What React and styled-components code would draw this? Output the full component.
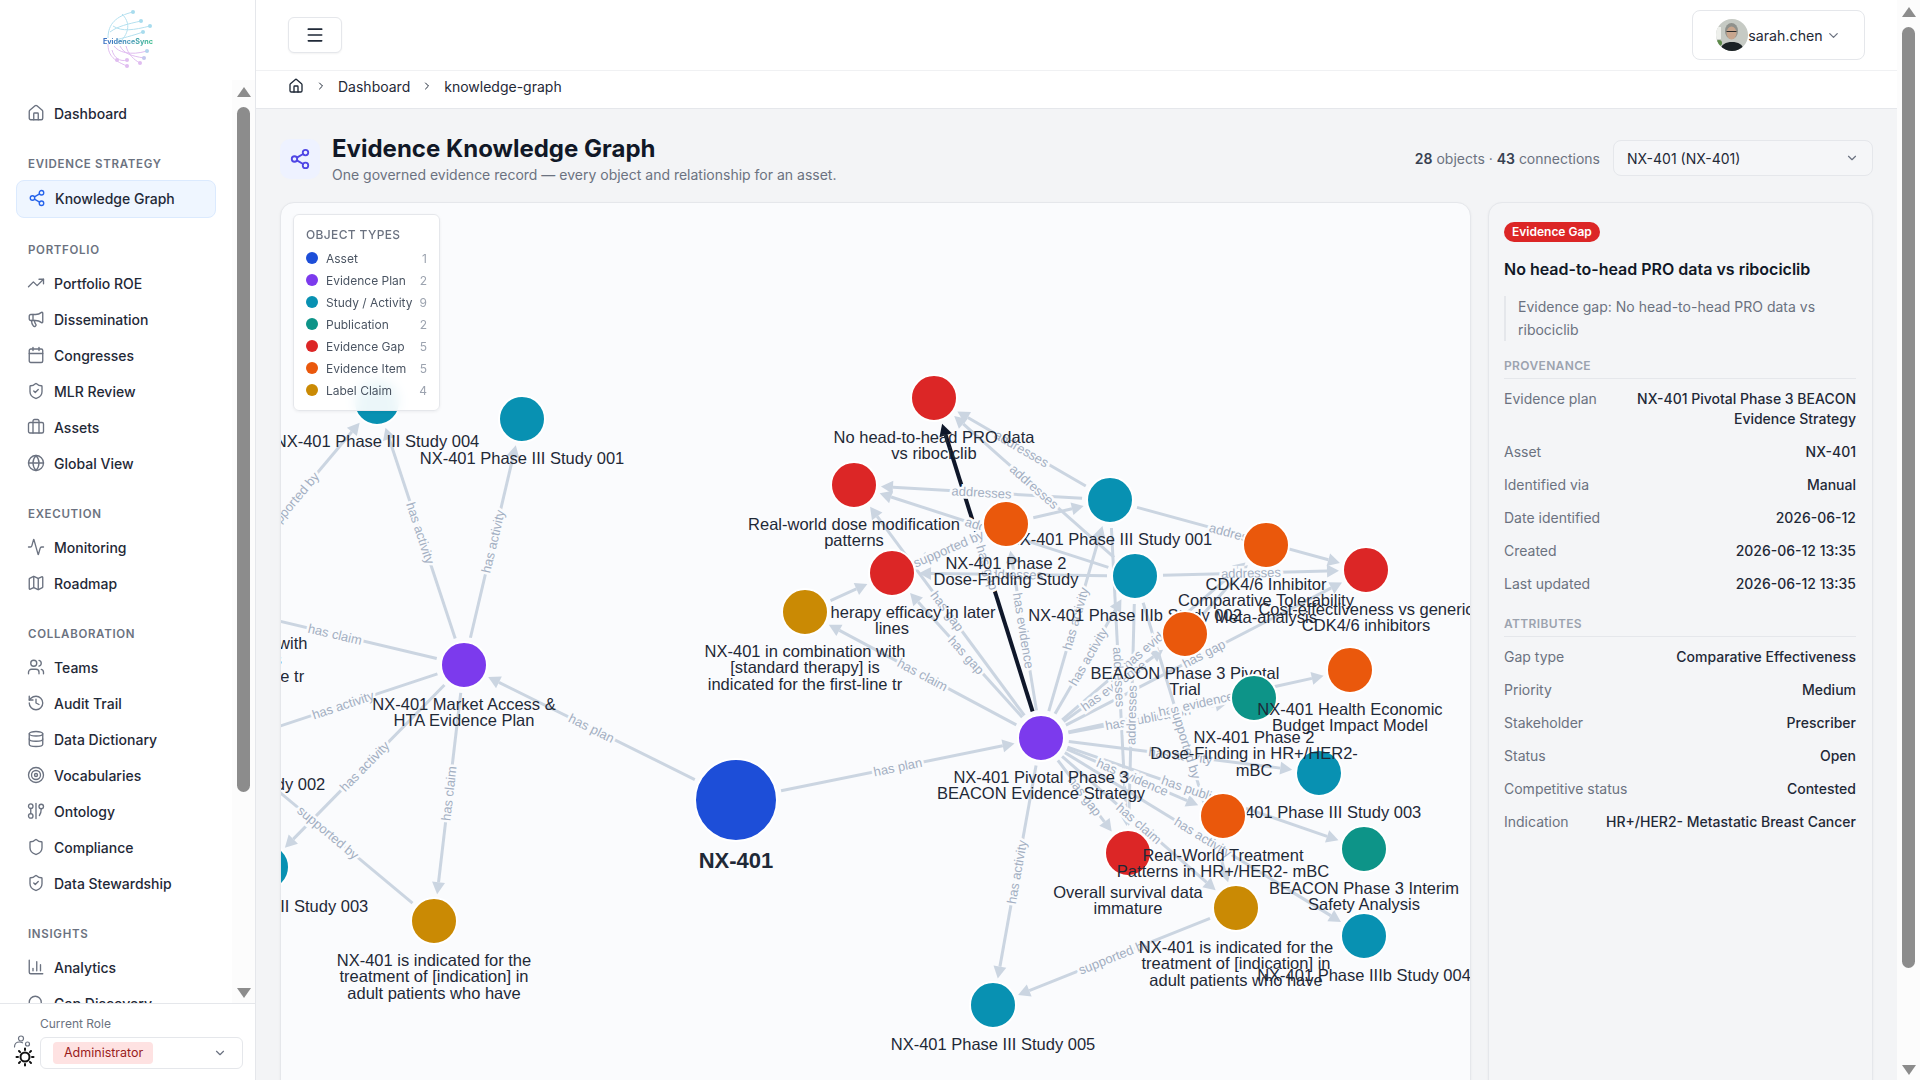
import React from 'react';
import styled, { createGlobalStyle } from 'styled-components';
import {
  House, Share2, TrendingUp, Megaphone, Calendar, ShieldCheck, Briefcase, Globe, Activity,
  Map as MapIcon, Users, History, Database, Target, Shield, ChartColumn, Search, Menu,
  ChevronRight, ChevronDown,
} from 'lucide-react';

const GlobalStyle = createGlobalStyle`
  * { box-sizing: border-box; }
  html, body { margin: 0; height: 100%; overflow: hidden; }
  body { font-family: Inter, "Liberation Sans", sans-serif; color: #1f2937; background: #f3f4f6; }
  #root { height: 100%; }
`;

const Page = styled.div`
  display: flex;
  height: 1080px;
  overflow: hidden;
`;

const Sidebar = styled.aside`
  display: flex;
  flex-direction: column;
  width: 256px;
  flex-shrink: 0;
  background: #fff;
  border-right: 1px solid #e5e7eb;
`;

const LogoBox = styled.div`
  display: flex;
  justify-content: center;
  height: 80px;
  padding-top: 8px;
  svg { filter: blur(0.35px); }
`;

const NavArea = styled.div`
  display: flex;
  flex: 1;
  min-height: 0;
`;

const NavList = styled.nav`
  flex: 1;
  min-width: 0;
  padding: 16px 16px 0;
  overflow: hidden;
`;

const Heading = styled.div`
  margin: 24px 0 8px;
  padding-left: 12px;
  font-size: 11.5px;
  line-height: 16px;
  font-weight: 600;
  letter-spacing: 0.06em;
  text-transform: uppercase;
  color: #6b7280;
`;

const NavItem = styled.a`
  display: flex;
  align-items: center;
  gap: 9px;
  height: ${p => (p.$active ? '38px' : '36px')};
  padding: 0 0 2px 11px;
  font-size: 14px;
  font-weight: 500;
  color: #1f2937;
  white-space: nowrap;
  border-radius: 8px;
  border: ${p => (p.$active ? '1px solid #dbeafe' : 'none')};
  background: ${p => (p.$active ? '#eff6ff' : 'transparent')};
  svg { flex-shrink: 0; color: ${p => (p.$active ? '#2563eb' : '#6b7280')}; }
`;

const ScrollBar = styled.div`
  display: flex;
  flex-direction: column;
  align-items: center;
  width: 23px;
  flex-shrink: 0;
  background: #fcfcfc;
  padding: ${p => p.$pad}px 0 ${p => p.$pad - 2}px;
`;

const ScrollThumb = styled.div`
  width: 13px;
  height: ${p => p.$height}px;
  margin-top: 10px;
  border-radius: 7px;
  background: #8c8c8c;
`;

const ScrollUp = styled.div`
  width: 0;
  height: 0;
  border-left: 7px solid transparent;
  border-right: 7px solid transparent;
  border-bottom: 10px solid #8c8c8c;
`;

const ScrollDown = styled(ScrollUp)`
  margin-top: auto;
  border-bottom: none;
  border-top: 10px solid #8c8c8c;
`;

const SideFooter = styled.div`
  display: flex;
  gap: 5px;
  height: 77px;
  flex-shrink: 0;
  padding: 12px 12px 0 13px;
  border-top: 1px solid #e5e7eb;
  background: #fff;
`;

const ThemeIcon = styled.svg`
  width: 22px;
  height: 34px;
  margin-top: 19px;
  flex-shrink: 0;
`;

const RoleCol = styled.div`
  flex: 1;
`;

const RoleLabel = styled.div`
  font-size: 12px;
  line-height: 16px;
  color: #6b7280;
  margin-bottom: 5px;
`;

const RoleSelect = styled.div`
  display: flex;
  align-items: center;
  justify-content: space-between;
  height: 32px;
  padding: 0 15px 0 12px;
  background: #fff;
  border: 1px solid #e5e7eb;
  border-radius: 6px;
  svg { color: #6b7280; }
`;

const RoleTag = styled.span`
  width: 100px;
  height: 22px;
  padding-left: 11px;
  font-size: 12.5px;
  line-height: 22px;
  color: #991b1b;
  background: #fee2e2;
  border-radius: 4px;
`;

const Main = styled.main`
  display: flex;
  flex-direction: column;
  flex: 1;
  min-width: 0;
`;

const TopBar = styled.header`
  display: flex;
  align-items: center;
  justify-content: space-between;
  height: 71px;
  flex-shrink: 0;
  padding: 0 32px;
  background: #fff;
  border-bottom: 1px solid #f0f1f3;
`;

const MenuButton = styled.button`
  display: flex;
  align-items: center;
  justify-content: center;
  width: 54px;
  height: 36px;
  padding: 0;
  background: #fff;
  color: #1f2937;
  border: 1px solid #e5e7eb;
  border-radius: 6px;
  box-shadow: 0 1px 2px rgba(0, 0, 0, 0.05);
`;

const UserButton = styled.div`
  display: flex;
  align-items: center;
  justify-content: center;
  width: 173px;
  height: 50px;
  font-size: 14.2px;
  color: #1f2937;
  background: #fff;
  border: 1px solid #e5e7eb;
  border-radius: 8px;
  svg.chev { margin-left: 3px; color: #6b7280; }
`;

const Avatar = styled.svg`
  width: 32px;
  height: 32px;
  border-radius: 50%;
  flex-shrink: 0;
`;

const Crumbs = styled.div`
  display: flex;
  align-items: center;
  gap: 11px;
  height: 38px;
  flex-shrink: 0;
  padding: 0 0 7px 32px;
  font-size: 14px;
  color: #1f2937;
  background: #fff;
  border-bottom: 1px solid #e5e7eb;
  svg { color: #1f2937; }
`;

const Content = styled.div`
  flex: 1;
  min-height: 0;
  display: flex;
  flex-direction: column;
  padding: 24px 24px 0;
  background: #f3f4f6;
`;

const TitleRow = styled.div`
  display: flex;
  align-items: center;
  flex-shrink: 0;
`;

const TitleIcon = styled.div`
  display: flex;
  align-items: center;
  justify-content: center;
  width: 40px;
  height: 40px;
  margin-right: 12px;
  border-radius: 10px;
  background: #eef2ff;
  color: #4f46e5;
`;

const TitleText = styled.div`
  flex: 1;
`;

const Title = styled.h1`
  margin: 1px 0;
  font-size: 24px;
  line-height: 30px;
  font-weight: 700;
  color: #111827;
`;

const Subtitle = styled.p`
  margin: 0;
  font-size: 14px;
  line-height: 20px;
  color: #6b7280;
`;

const Stats = styled.div`
  margin: 0 13px 2px 0;
  font-size: 14px;
  color: #6b7280;
  b { font-weight: 600; color: #374151; }
`;

const AssetSelect = styled.div`
  display: flex;
  align-items: center;
  justify-content: space-between;
  width: 260px;
  height: 36px;
  margin-bottom: 2px;
  padding: 0 13px;
  font-size: 14px;
  color: #1f2937;
  border: 1px solid #e5e7eb;
  border-radius: 8px;
  background: #f5f6f8;
  svg { color: #6b7280; }
`;

const Columns = styled.div`
  flex: 1;
  min-height: 0;
  display: grid;
  grid-template-columns: 1191px 385px;
  gap: 17px;
  margin-top: 17px;
  margin-bottom: -20px;
`;

const GraphCard = styled.section`
  position: relative;
  overflow: hidden;
  background: #fafbfd;
  border: 1px solid #e5e7eb;
  border-radius: 14px;
  box-shadow: 0 1px 3px rgba(15, 23, 42, 0.05);
`;

const GraphSvg = styled.svg`
  display: block;
  font-family: "Liberation Sans", Arial, sans-serif;
`;

const EdgeLine = styled.line`
  stroke: ${p => (p.$selected ? '#0f172a' : '#cbd5e1')};
  stroke-width: ${p => (p.$selected ? 4 : 3)};
`;

const EdgeHead = styled.polygon`
  fill: ${p => (p.$selected ? '#0f172a' : '#cbd5e1')};
`;

const EdgeLabel = styled.text`
  font-size: 13px;
  fill: #a3afc2;
  stroke: #fafbfd;
  stroke-width: 5px;
  paint-order: stroke;
  text-anchor: middle;
  dominant-baseline: central;
`;

const NodeCircle = styled.circle`
  fill: ${p => p.$color};
  stroke: #fff;
  stroke-width: 2;
`;

const NodeLabel = styled.text`
  font-size: ${p => (p.$big ? '22px' : '16.5px')};
  font-weight: ${p => (p.$big ? 700 : 400)};
  fill: #1f2937;
  text-anchor: middle;
  dominant-baseline: central;
`;

const Legend = styled.div`
  position: absolute;
  left: 12px;
  top: 11px;
  width: 147px;
  height: 197px;
  padding: 12px;
  background: rgba(255, 255, 255, 0.92);
  backdrop-filter: blur(6px);
  border: 1px solid #e5e7eb;
  border-radius: 6px;
  box-shadow: 0 1px 3px rgba(15, 23, 42, 0.06);
`;

const LegendTitle = styled.div`
  margin-bottom: 4px;
  font-size: 12px;
  line-height: 16px;
  font-weight: 500;
  letter-spacing: 0.03em;
  color: #6b7280;
`;

const LegendRow = styled.div`
  display: flex;
  align-items: center;
  height: 22px;
  font-size: 12px;
  color: #4b5563;
`;

const LegendDot = styled.span`
  width: 12px;
  height: 12px;
  margin-right: 8px;
  border-radius: 50%;
  background: ${p => p.$color};
`;

const LegendCount = styled.span`
  margin-left: auto;
  color: #9ca3af;
`;

const Panel = styled.aside`
  padding: 19px 16px 0 15px;
  background: #f4f5f7;
  border: 1px solid #e5e7eb;
  border-radius: 14px;
  box-shadow: 0 1px 3px rgba(15, 23, 42, 0.05);
`;

const GapBadge = styled.span`
  display: inline-block;
  height: 20px;
  padding: 0 8px;
  font-size: 12px;
  line-height: 20px;
  font-weight: 600;
  color: #fff;
  background: #dc2626;
  border-radius: 999px;
  vertical-align: top;
`;

const PanelTitle = styled.h2`
  margin: 15px 0;
  font-size: 16px;
  line-height: 24px;
  font-weight: 600;
  color: #111827;
`;

const PanelDesc = styled.p`
  margin: 0 0 17px;
  padding-left: 12px;
  font-size: 14px;
  line-height: 22.5px;
  color: #6b7280;
  border-left: 2px solid #e5e7eb;
`;

const SectionHead = styled.div`
  padding-bottom: 4px;
  font-size: 12px;
  line-height: 16px;
  font-weight: 600;
  letter-spacing: 0.03em;
  color: #9ca3af;
  border-bottom: 1px solid #e5e7eb;
`;

const Rows = styled.div`
  display: flex;
  flex-direction: column;
  gap: 13px;
  margin: 10px 0 22px;
`;

const Row = styled.div`
  display: flex;
  justify-content: space-between;
  gap: 24px;
  font-size: 14px;
  line-height: 20px;
`;

const RowLabel = styled.span`
  flex-shrink: 0;
  color: #6b7280;
`;

const RowValue = styled.span`
  text-align: right;
  font-weight: 500;
  color: #1f2937;
`;

const COLORS = {
  asset: '#1d4ed8',
  plan: '#7c3aed',
  study: '#0891b2',
  pub: '#0d9488',
  gap: '#dc2626',
  item: '#ea580c',
  claim: '#ca8a04',
};

const LEGEND = [
  ['Asset', COLORS.asset, 1],
  ['Evidence Plan', COLORS.plan, 2],
  ['Study / Activity', COLORS.study, 9],
  ['Publication', COLORS.pub, 2],
  ['Evidence Gap', COLORS.gap, 5],
  ['Evidence Item', COLORS.item, 5],
  ['Label Claim', COLORS.claim, 4],
];

// drawn in this order, later nodes cover earlier labels
const NODES = [
  { id: 'comboL', t: 'claim', x: 207, y: 604, lines: ['NX-401 in combination with', '[standard therapy] is', 'indicated for the first-line tr'] },
  { id: 's004', t: 'study', x: 377, y: 402, lines: ['NX-401 Phase III Study 004'] },
  { id: 's001a', t: 'study', x: 522, y: 419, lines: ['NX-401 Phase III Study 001'] },
  { id: 's003a', t: 'study', x: 266, y: 867, lines: ['NX-401 Phase III Study 003'] },
  { id: 's002', t: 'study', x: 223, y: 745, lines: ['NX-401 Phase III Study 002'] },
  { id: 'market', t: 'plan', x: 464, y: 665, lines: ['NX-401 Market Access &', 'HTA Evidence Plan'] },
  { id: 'claimB', t: 'claim', x: 434, y: 921, lines: ['NX-401 is indicated for the', 'treatment of [indication] in', 'adult patients who have'] },
  { id: 'asset', t: 'asset', x: 736, y: 800, r: 40, big: true, lines: ['NX-401'] },
  { id: 'gapNo', t: 'gap', x: 934, y: 398, lines: ['No head-to-head PRO data', 'vs ribociclib'] },
  { id: 'gapRW', t: 'gap', x: 854, y: 485, lines: ['Real-world dose modification', 'patterns'] },
  { id: 'gapTher', t: 'gap', x: 892, y: 573, lines: ['herapy efficacy in later', 'lines'], lineX: [913, 892] },
  { id: 's001b', t: 'study', x: 1110, y: 500, lines: ['NX-401 Phase III Study 001'] },
  { id: 'pivot', t: 'plan', x: 1041, y: 738, lines: ['NX-401 Pivotal Phase 3', 'BEACON Evidence Strategy'] },
  { id: 's002b', t: 'study', x: 1135, y: 576, lines: ['NX-401 Phase IIIb Study 002'] },
  { id: 'claimC', t: 'claim', x: 805, y: 612, lines: ['NX-401 in combination with', '[standard therapy] is', 'indicated for the first-line tr'] },
  { id: 'itemP2', t: 'item', x: 1006, y: 524, lines: ['NX-401 Phase 2', 'Dose-Finding Study'] },
  { id: 'cdk', t: 'item', x: 1266, y: 545, lines: ['CDK4/6 Inhibitor', 'Comparative Tolerability', 'Meta-analysis'] },
  { id: 'gapCost', t: 'gap', x: 1366, y: 570, lines: ['Cost-effectiveness vs generic', 'CDK4/6 inhibitors'] },
  { id: 'beacon', t: 'item', x: 1185, y: 634, lines: ['BEACON Phase 3 Pivotal', 'Trial'] },
  { id: 's003b', t: 'study', x: 1319, y: 773, lines: ['NX-401 Phase III Study 003'] },
  { id: 'pubP2', t: 'pub', x: 1254, y: 698, lines: ['NX-401 Phase 2', 'Dose-Finding in HR+/HER2-', 'mBC'] },
  { id: 'he', t: 'item', x: 1350, y: 670, lines: ['NX-401 Health Economic', 'Budget Impact Model'] },
  { id: 'gapOS', t: 'gap', x: 1128, y: 853, lines: ['Overall survival data', 'immature'] },
  { id: 'itemRW', t: 'item', x: 1223, y: 816, lines: ['Real-World Treatment', 'Patterns in HR+/HER2- mBC'] },
  { id: 'pubInt', t: 'pub', x: 1364, y: 849, lines: ['BEACON Phase 3 Interim', 'Safety Analysis'] },
  { id: 'claimR', t: 'claim', x: 1236, y: 908, lines: ['NX-401 is indicated for the', 'treatment of [indication] in', 'adult patients who have'] },
  { id: 's004b', t: 'study', x: 1364, y: 936, lines: ['NX-401 Phase IIIb Study 004'] },
  { id: 's005', t: 'study', x: 993, y: 1005, lines: ['NX-401 Phase III Study 005'] },
];

const EDGES = [
  ['asset', 'market', 'has plan'],
  ['asset', 'pivot', 'has plan'],
  ['market', 's004', 'has activity'],
  ['market', 's001a', 'has activity'],
  ['market', 'comboL', 'has claim'],
  ['market', 's002', 'has activity'],
  ['market', 's003a', 'has activity'],
  ['market', 'claimB', 'has claim'],
  ['claimB', 's002', 'supported by'],
  ['comboL', 's004', 'supported by'],
  ['pivot', 'gapRW', 'has gap'],
  ['pivot', 'gapTher', 'has gap'],
  ['pivot', 'claimC', 'has claim'],
  ['pivot', 'itemP2', 'has evidence'],
  ['pivot', 's001b', 'has activity'],
  ['pivot', 's002b', 'has activity'],
  ['pivot', 'beacon', 'has evidence'],
  ['pivot', 'cdk', 'has evidence'],
  ['pivot', 'pubP2', 'has publication'],
  ['pivot', 'he', 'has evidence'],
  ['pivot', 'gapCost', 'has gap'],
  ['pivot', 's003b', 'has activity'],
  ['pivot', 'itemRW', 'has evidence'],
  ['pivot', 'pubInt', 'has publication'],
  ['pivot', 's004b', 'has activity'],
  ['pivot', 'gapOS', 'has gap'],
  ['pivot', 'claimR', 'has claim'],
  ['pivot', 's005', 'has activity'],
  ['claimR', 's005', 'supported by'],
  ['s001b', 'gapNo', 'addresses'],
  ['s001b', 'gapRW', 'addresses'],
  ['s001b', 'gapCost', 'addresses'],
  ['s001b', 'gapOS', 'addresses'],
  ['s002b', 'gapNo', 'addresses'],
  ['s002b', 'gapRW', 'addresses'],
  ['s002b', 'gapTher', 'addresses'],
  ['s002b', 'gapCost', 'addresses'],
  ['s002b', 'gapOS', 'addresses'],
  ['s002b', 'claimR', 'supported by'],
  ['itemP2', 'gapTher', 'supported by'],
  ['itemP2', 's001b', ''],
  ['claimC', 'gapTher', ''],
  ['beacon', 'cdk', ''],
  ['pivot', 'gapNo', 'has gap', true],
];

const byId = Object.fromEntries(NODES.map(n => [n.id, n]));

function edgeGeom(from, to) {
  const a = byId[from];
  const b = byId[to];
  const dx = b.x - a.x;
  const dy = b.y - a.y;
  const len = Math.hypot(dx, dy);
  const ux = dx / len;
  const uy = dy / len;
  const ra = (a.r || 22) + 6;
  const rb = (b.r || 22) + 5;
  const start = { x: a.x + ux * ra, y: a.y + uy * ra };
  const tip = { x: b.x - ux * rb, y: b.y - uy * rb };
  const base = { x: tip.x - ux * 12, y: tip.y - uy * 12 };
  const head = [
    [tip.x, tip.y],
    [base.x - uy * 6.5, base.y + ux * 6.5],
    [base.x + uy * 6.5, base.y - ux * 6.5],
  ].map(p => p.join(',')).join(' ');
  let angle = (Math.atan2(dy, dx) * 180) / Math.PI;
  if (angle > 90) angle -= 180;
  if (angle < -90) angle += 180;
  return {
    x1: start.x, y1: start.y, x2: base.x, y2: base.y,
    head, mx: (start.x + tip.x) / 2, my: (start.y + tip.y) / 2, angle,
  };
}

function Graph() {
  const edges = EDGES.map(([from, to, label, selected]) => ({ ...edgeGeom(from, to), label, selected, key: from + to }));
  return (
    <GraphSvg width="1189" height="877" viewBox="281 203 1189 877">
      {edges.map(e => (
        <g key={e.key}>
          <EdgeLine x1={e.x1} y1={e.y1} x2={e.x2} y2={e.y2} $selected={e.selected} />
          <EdgeHead points={e.head} $selected={e.selected} />
        </g>
      ))}
      {edges.filter(e => e.label).map(e => (
        <EdgeLabel key={e.key} x={e.mx} y={e.my} transform={`rotate(${e.angle} ${e.mx} ${e.my})`}>{e.label}</EdgeLabel>
      ))}
      {NODES.map(n => {
        const r = n.r || 22;
        return (
          <g key={n.id}>
            <NodeCircle cx={n.x} cy={n.y} r={r + 1} $color={COLORS[n.t]} />
            {n.lines.map((line, i) => (
              <NodeLabel key={line} $big={n.big} x={n.lineX ? n.lineX[i] : n.x} y={n.y + r + (n.big ? 20 : 16.8) + i * 16.5}>{line}</NodeLabel>
            ))}
          </g>
        );
      })}
    </GraphSvg>
  );
}

function Logo() {
  const blue = [
    'M8 30C8 16 16 8 33 4', 'M10 24C18 18 28 16 41 13', 'M13 18C22 24 34 22 50 18',
    'M16 32C22 30 32 28 43 24', 'M22 6C30 14 30 24 20 34',
  ];
  const lilac = [
    'M8 36C8 46 12 52 27 58', 'M14 38C18 44 30 48 47 43', 'M20 38C24 46 32 48 44 50',
    'M26 38C28 46 34 52 40 55', 'M12 42C14 50 20 54 27 52',
  ];
  return (
    <svg width="56" height="64" viewBox="0 0 56 64">
      <defs>
        <linearGradient id="logoText" x1="0" x2="1" y1="0" y2="0">
          <stop offset="0" stopColor="#3b6fc4" />
          <stop offset="0.6" stopColor="#4fa0b8" />
          <stop offset="1" stopColor="#3fbf8f" />
        </linearGradient>
      </defs>
      <g fill="none" stroke="#b4e0ef" strokeWidth="1">{blue.map(d => <path key={d} d={d} />)}</g>
      <g fill="none" stroke="#e0bdf0" strokeWidth="1">{lilac.map(d => <path key={d} d={d} />)}</g>
      <g fill="#a8dcee">
        <circle cx="33" cy="4" r="2" /><circle cx="41" cy="13" r="2" /><circle cx="50" cy="18" r="2" /><circle cx="43" cy="24" r="2" />
      </g>
      <g fill="#e0bdf0">
        <circle cx="27" cy="58" r="2" /><circle cx="40" cy="55" r="2" /><circle cx="17" cy="52" r="2" /><circle cx="27" cy="52" r="2" />
      </g>
      <circle cx="47" cy="43" r="2" fill="#b4d4ee" />
      <circle cx="44" cy="50" r="2" fill="#c4c8ee" />
      <text x="28" y="35.5" textAnchor="middle" fontFamily="Inter, sans-serif" fontSize="7.2" fontWeight="700" fill="url(#logoText)">EvidenceSync</text>
    </svg>
  );
}

function UserAvatar() {
  return (
    <Avatar viewBox="0 0 32 32">
      <rect width="32" height="32" fill="#c6cac4" />
      <rect x="0" y="8" width="5" height="12" fill="#eef0ec" />
      <circle cx="3" cy="24" r="3" fill="#5d8a4a" />
      <path d="M4 32c1-7 6-9 12-9s11 2 12 9z" fill="#1b2225" />
      <ellipse cx="15.5" cy="12" rx="6.5" ry="8" fill="#8f918c" />
      <ellipse cx="15.5" cy="14" rx="5" ry="6.5" fill="#c8a68e" />
      <path d="M10.5 12.5h10" stroke="#2c2c2c" strokeWidth="1.2" />
    </Avatar>
  );
}

function OntologyIcon() {
  return (
    <svg width="18" height="18" viewBox="0 0 24 24" fill="none" stroke="currentColor" strokeWidth="1.8" strokeLinecap="round">
      <circle cx="5" cy="5.5" r="3" />
      <circle cx="5" cy="18.5" r="3" />
      <path d="M5 8.5v7" />
      <path d="M12 2v20" />
      <circle cx="19" cy="6" r="3" />
      <path d="M19 9c0 4-1 7-2.500 9" />
    </svg>
  );
}

const NAV = [
  { items: [['Dashboard', House]] },
  { title: 'Evidence Strategy', items: [['Knowledge Graph', Share2, true]] },
  { title: 'Portfolio', items: [['Portfolio ROE', TrendingUp], ['Dissemination', Megaphone], ['Congresses', Calendar], ['MLR Review', ShieldCheck], ['Assets', Briefcase], ['Global View', Globe]] },
  { title: 'Execution', items: [['Monitoring', Activity], ['Roadmap', MapIcon]] },
  { title: 'Collaboration', items: [['Teams', Users], ['Audit Trail', History], ['Data Dictionary', Database], ['Vocabularies', Target], ['Ontology', OntologyIcon], ['Compliance', Shield], ['Data Stewardship', ShieldCheck]] },
  { title: 'Insights', items: [['Analytics', ChartColumn], ['Gap Discovery', Search]] },
];

const PROVENANCE = [
  ['Evidence plan', 'NX-401 Pivotal Phase 3 BEACON Evidence Strategy'],
  ['Asset', 'NX-401'],
  ['Identified via', 'Manual'],
  ['Date identified', '2026-06-12'],
  ['Created', '2026-06-12 13:35'],
  ['Last updated', '2026-06-12 13:35'],
];

const ATTRIBUTES = [
  ['Gap type', 'Comparative Effectiveness'],
  ['Priority', 'Medium'],
  ['Stakeholder', 'Prescriber'],
  ['Status', 'Open'],
  ['Competitive status', 'Contested'],
  ['Indication', 'HR+/HER2- Metastatic Breast Cancer'],
];

const InfoRows = ({ rows }) => (
  <Rows>
    {rows.map(([label, value]) => (
      <Row key={label}>
        <RowLabel>{label}</RowLabel>
        <RowValue>{value}</RowValue>
      </Row>
    ))}
  </Rows>
);

export default function App() {
  return (
    <>
      <GlobalStyle />
      <Page>
        <Sidebar>
          <LogoBox><Logo /></LogoBox>
          <NavArea>
            <NavList>
              {NAV.map((group, i) => (
                <div key={i}>
                  {group.title && <Heading>{group.title}</Heading>}
                  {group.items.map(([label, Icon, active]) => (
                    <NavItem key={label} $active={active}>
                      <Icon size={18} strokeWidth={1.8} />
                      {label}
                    </NavItem>
                  ))}
                </div>
              ))}
            </NavList>
            <ScrollBar $pad={7}>
              <ScrollUp />
              <ScrollThumb $height={685} />
              <ScrollDown />
            </ScrollBar>
          </NavArea>
          <SideFooter>
            <ThemeIcon viewBox="0 0 22 34" fill="none" strokeLinecap="round">
              <circle cx="8" cy="3.500" r="2.500" stroke="#6b7280" strokeWidth="1.200" />
              <path d="M1.500 12c0-3 2-5 5-5 1 0 2 .3 3 .8" stroke="#6b7280" strokeWidth="1.200" />
              <circle cx="14.500" cy="9" r="2" stroke="#6b7280" strokeWidth="1.200" />
              <circle cx="12" cy="22" r="4.500" stroke="#111" strokeWidth="2" />
              <path d="M12 13.500v1.500M12 29v1.500M3.500 22H5M19 22h1.500M6 16l1.100 1.100M16.900 26.900 18 28M6 28l1.100-1.100M16.900 17.100 18 16" stroke="#111" strokeWidth="2" />
            </ThemeIcon>
            <RoleCol>
              <RoleLabel>Current Role</RoleLabel>
              <RoleSelect>
                <RoleTag>Administrator</RoleTag>
                <ChevronDown size={14} />
              </RoleSelect>
            </RoleCol>
          </SideFooter>
        </Sidebar>
        <Main>
          <TopBar>
            <MenuButton><Menu size={20} /></MenuButton>
            <UserButton>
              <UserAvatar />
              sarah.chen
              <ChevronDown className="chev" size={15} />
            </UserButton>
          </TopBar>
          <Crumbs>
            <House size={16} />
            <ChevronRight size={12} />
            <span>Dashboard</span>
            <ChevronRight size={12} />
            <span>knowledge-graph</span>
          </Crumbs>
          <Content>
            <TitleRow>
              <TitleIcon><Share2 size={22} /></TitleIcon>
              <TitleText>
                <Title>Evidence Knowledge Graph</Title>
                <Subtitle>One governed evidence record — every object and relationship for an asset.</Subtitle>
              </TitleText>
              <Stats><b>28</b> objects · <b>43</b> connections</Stats>
              <AssetSelect>
                NX-401 (NX-401)
                <ChevronDown size={14} />
              </AssetSelect>
            </TitleRow>
            <Columns>
              <GraphCard>
                <Graph />
                <Legend>
                  <LegendTitle>OBJECT TYPES</LegendTitle>
                  {LEGEND.map(([label, color, count]) => (
                    <LegendRow key={label}>
                      <LegendDot $color={color} />
                      {label}
                      <LegendCount>{count}</LegendCount>
                    </LegendRow>
                  ))}
                </Legend>
              </GraphCard>
              <Panel>
                <GapBadge>Evidence Gap</GapBadge>
                <PanelTitle>No head-to-head PRO data vs ribociclib</PanelTitle>
                <PanelDesc>Evidence gap: No head-to-head PRO data vs ribociclib</PanelDesc>
                <SectionHead>PROVENANCE</SectionHead>
                <InfoRows rows={PROVENANCE} />
                <SectionHead>ATTRIBUTES</SectionHead>
                <InfoRows rows={ATTRIBUTES} />
              </Panel>
            </Columns>
          </Content>
        </Main>
        <ScrollBar $pad={7}>
          <ScrollUp />
          <ScrollThumb $height={941} />
          <ScrollDown />
        </ScrollBar>
      </Page>
    </>
  );
}
